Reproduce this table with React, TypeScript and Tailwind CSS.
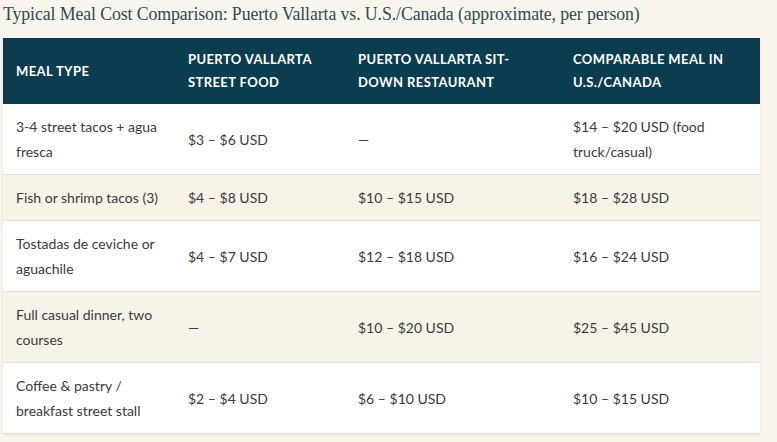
const rows: string[][] = [
  ['3-4 street tacos + agua fresca', '$3 – $6 USD', '—', '$14 – $20 USD (food truck/casual)'],
  ['Fish or shrimp tacos (3)', '$4 – $8 USD', '$10 – $15 USD', '$18 – $28 USD'],
  ['Tostadas de ceviche or aguachile', '$4 – $7 USD', '$12 – $18 USD', '$16 – $24 USD'],
  ['Full casual dinner, two courses', '—', '$10 – $20 USD', '$25 – $45 USD'],
  ['Coffee & pastry / breakfast street stall', '$2 – $4 USD', '$6 – $10 USD', '$10 – $15 USD'],
]

const heads = ['Meal Type', 'Puerto Vallarta Street Food', 'Puerto Vallarta Sit-Down Restaurant', 'Comparable Meal in U.S./Canada']

export default function App() {
  return (
    <div className="w-[777px] h-[442px] overflow-hidden bg-[#f9f5ec]">
      <div className="pl-[3px] pt-[3px]">
        <p className="text-[17.8px] leading-[22px] text-[#2f4a52] font-['Liberation_Serif',serif] tracking-[-0.1px]">
          Typical Meal Cost Comparison: Puerto Vallarta vs. U.S./Canada (approximate, per person)
        </p>
        <table className="mt-[13px] w-[757px] table-fixed border-collapse bg-white shadow-[0_1px_3px_rgba(0,0,0,0.08)] font-['Lato',sans-serif]">
          <colgroup>
            <col className="w-[172px]" />
            <col className="w-[170px]" />
            <col className="w-[215px]" />
            <col className="w-[200px]" />
          </colgroup>
          <thead>
            <tr className="bg-[#0b3d4f]">
              {heads.map((h) => (
                <th key={h} className="px-[13px] py-[10px] text-left align-middle text-white uppercase font-bold text-[13px] leading-[23px] tracking-[0.4px]">
                  {h}
                </th>
              ))}
            </tr>
          </thead>
          <tbody>
            {rows.map((r, i) => (
              <tr key={i} className={(i % 2 === 1 ? 'bg-[#f8f3e9]' : 'bg-white') + ' border-b border-[#e6dfd3]'}>
                {r.map((c, j) => (
                  <td key={j} className="px-[13px] py-[10px] align-middle text-[14px] leading-[25px] text-[#3b3b3b]">
                    {c}
                  </td>
                ))}
              </tr>
            ))}
          </tbody>
        </table>
      </div>
    </div>
  )
}
